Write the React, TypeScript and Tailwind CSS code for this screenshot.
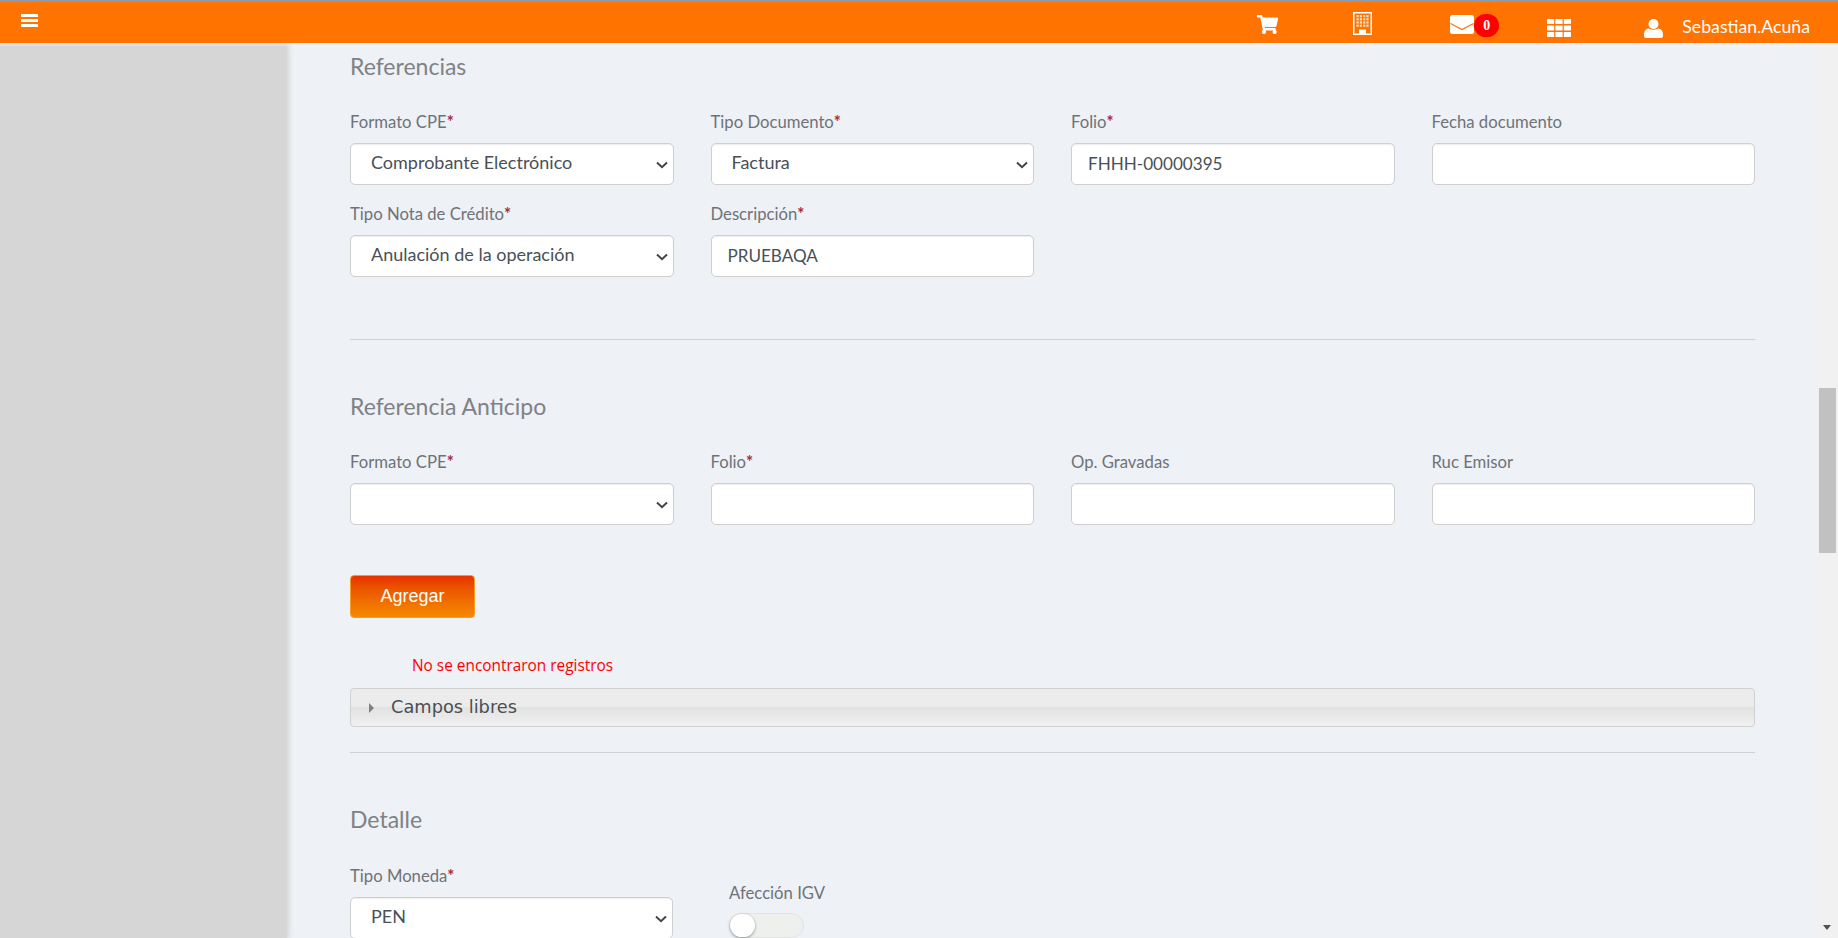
import { FaShoppingCart } from "react-icons/fa";

function Label({ text, required }: { text: string; required?: boolean }) {
  return (
    <label className="block h-[24px] text-[16.7px] leading-[24px] text-[#6f7378]">
      {text}
      {required && <span className="font-bold text-[#a52a3a]">*</span>}
    </label>
  );
}

function SelectField({ label, value, required }: { label: string; value: string; required?: boolean }) {
  return (
    <div>
      <Label text={label} required={required} />
      <div className="relative mt-[9px]">
        <select
          defaultValue={value}
          className="block h-[42px] w-full appearance-none rounded-[5px] border border-[#cfcfcf] bg-white pb-[3px] pl-[20px] pr-[24px] text-[18px] text-[#495057] shadow-[inset_0_1px_1px_rgba(0,0,0,0.075)]"
        >
          <option value={value}>{value}</option>
        </select>
        {/* chevron drawn over the select, the native one sits too far right */}
        <svg className="pointer-events-none absolute right-[6px] top-[18px]" width="12" height="8" viewBox="0 0 12 8">
          <path d="M1 1.5 L6 6.2 L11 1.5" fill="none" stroke="#444" strokeWidth="2" />
        </svg>
      </div>
    </div>
  );
}

function TextField({ label, value, required }: { label: string; value: string; required?: boolean }) {
  return (
    <div>
      <Label text={label} required={required} />
      <input
        readOnly
        value={value}
        className="mt-[9px] block h-[42px] w-full rounded-[5px] border border-[#cfcfcf] bg-white px-[16px] pb-[2px] text-[17.1px] text-[#495057] shadow-[inset_0_1px_1px_rgba(0,0,0,0.075)]"
      />
    </div>
  );
}

function Heading({ children }: { children: string }) {
  return <h2 className="text-[23px] leading-[30px] text-[#7e8286]">{children}</h2>;
}

function BarsIcon() {
  return (
    <svg className="mb-[4px] ml-[21px]" width="17" height="13" viewBox="0 0 17 13" fill="#fff">
      <rect width="17" height="3" rx="0.5" />
      <rect y="5" width="17" height="3" rx="0.5" />
      <rect y="10" width="17" height="3" rx="0.5" />
    </svg>
  );
}

function BuildingIcon() {
  const cols = [3.5, 6.8, 10.1, 13.4];
  const rows = [3, 6.2, 9.4, 12.6];
  return (
    <svg className="ml-[74px] mt-[2px]" width="19" height="23" viewBox="0 0 19 23" fill="#fff">
      <rect x="0.75" y="0.75" width="17.5" height="21.5" fill="none" stroke="#fff" strokeWidth="1.5" />
      {rows.map((y) =>
        cols.map((x) => <rect key={`${x}-${y}`} x={x} y={y} width="2.2" height="2.2" fill="#ffe3c8" />),
      )}
      <rect x="6" y="17.5" width="7" height="5" />
    </svg>
  );
}

function EnvelopeIcon() {
  return (
    <svg className="ml-[78px] mt-[4px]" width="24" height="19" viewBox="0 0 24 19">
      <rect width="24" height="19" rx="2.5" fill="#fff" />
      <path d="M0.5 8.5 L12 14.5 L23.5 8.5" fill="none" stroke="#ff7300" strokeWidth="1.2" />
    </svg>
  );
}

function GridIcon() {
  const cols = [0, 8.4, 16.8];
  const rows = [0, 6.5, 13];
  return (
    <svg className="ml-[48px] mt-[11px]" width="24" height="18" viewBox="0 0 24 18" fill="#fff">
      {rows.map((y) => cols.map((x) => <rect key={`${x}-${y}`} x={x} y={y} width="7.2" height="5" rx="0.5" />))}
    </svg>
  );
}

function UserIcon() {
  return (
    <svg className="ml-[73px] mt-[12px]" width="19" height="19" viewBox="0 0 19 19" fill="#fff">
      <circle cx="9.5" cy="5" r="5" />
      <path d="M0 15.5C0 11.5 2.5 9.5 5 9.5C6.5 11 12.5 11 14 9.5C16.5 9.5 19 11.5 19 15.5V17a2 2 0 0 1-2 2H2a2 2 0 0 1-2-2Z" />
    </svg>
  );
}

function TopBar() {
  return (
    <header className="z-10 flex h-[43px] shrink-0 items-center border-t-2 border-[#8c9ab0] bg-[#ff7300] text-white">
      <BarsIcon />
      <div className="ml-auto flex items-center">
        <FaShoppingCart className="mt-[4px] h-[19px] w-[23px]" />
        <BuildingIcon />
        <EnvelopeIcon />
        <span className="mt-[7px] flex h-[23px] w-[25px] items-center justify-center rounded-full bg-[#f00] font-['Liberation_Serif',serif] text-[14px] font-bold">
          0
        </span>
        <GridIcon />
        <UserIcon />
        <span className="ml-[19px] mr-[28px] mt-[10px] font-['Lato',sans-serif] text-[17.7px]">Sebastian.Acuña</span>
      </div>
    </header>
  );
}

function Scrollbar() {
  return (
    <div className="relative w-[21px] shrink-0 bg-[#f1f1f1]">
      <div className="ml-[2px] mt-[345px] h-[165px] w-[17px] bg-[#c1c1c1]" />
      <div className="absolute bottom-[8px] left-[6px] h-0 w-0 border-x-[4px] border-t-[5px] border-x-transparent border-t-[#505050]" />
    </div>
  );
}

export default function App() {
  return (
    <div className="flex h-[938px] w-[1838px] flex-col overflow-hidden bg-[#eef1f6] font-['Lato',sans-serif]">
      <TopBar />
      <div className="flex min-h-0 flex-1">
        {/* soft edge on top and right, same grey as the panel */}
        <aside className="mt-[3px] w-[287px] shrink-0 bg-[#d6d6d6] shadow-[0_0_5px_2px_#d6d6d6]" />
        <main className="min-w-0 flex-1 overflow-hidden pl-[63px] pr-[62px] pt-[8px]">
          <Heading>Referencias</Heading>
          <div className="mt-[29px] grid grid-cols-4 gap-x-[37px] gap-y-[17px]">
            <SelectField label="Formato CPE" value="Comprobante Electrónico" required />
            <SelectField label="Tipo Documento" value="Factura" required />
            <TextField label="Folio" value="FHHH-00000395" required />
            <TextField label="Fecha documento" value="" />
            <SelectField label="Tipo Nota de Crédito" value="Anulación de la operación" required />
            <TextField label="Descripción" value="PRUEBAQA" required />
          </div>
          <hr className="mt-[62px] border-[#cfd1d4]" />
          <div className="mt-[51px]">
            <Heading>Referencia Anticipo</Heading>
          </div>
          <div className="mt-[29px] grid grid-cols-4 gap-x-[37px]">
            <SelectField label="Formato CPE" value="" required />
            <TextField label="Folio" value="" required />
            <TextField label="Op. Gravadas" value="" />
            <TextField label="Ruc Emisor" value="" />
          </div>
          <button className="mt-[50px] block h-[43px] w-[125px] rounded-[4px] border border-[#f59a23] bg-gradient-to-b from-[#e63200] to-[#f58a00] font-['Liberation_Sans',sans-serif] text-[18px] text-white">
            Agregar
          </button>
          <p className="ml-[62px] mt-[36px] font-['Open_Sans',sans-serif] text-[15.4px] leading-[24px] text-[#f00]">
            No se encontraron registros
          </p>
          <div className="mt-[10px] flex h-[39px] items-center rounded-[4px] border border-[#d0d0d0] bg-[linear-gradient(#ececec_50%,#e2e2e2_50%,#f0f0f0)] pl-[18px]">
            <span className="h-0 w-0 border-y-[5px] border-l-[5px] border-y-transparent border-l-[#808080]" />
            <span className="ml-[17px] font-['DejaVu_Sans',sans-serif] text-[17.8px] text-[#4a4f55]">Campos libres</span>
          </div>
          <hr className="mt-[25px] border-[#cfd1d4]" />
          <div className="mt-[51px]">
            <Heading>Detalle</Heading>
          </div>
          <div className="mt-[30px] flex gap-[56px]">
            <div className="w-[323px]">
              <SelectField label="Tipo Moneda" value="PEN" required />
            </div>
            <div className="mt-[17px] w-[200px]">
              <Label text="Afección IGV" />
              <div className="relative mt-[8px] h-[25px] w-[75px] rounded-full border border-[#e2e4e4] bg-[#eef0ee]">
                <span className="absolute left-0 top-0 h-[23px] w-[25px] rounded-full bg-white shadow-[0_1px_3px_rgba(0,0,0,0.4)]" />
              </div>
            </div>
          </div>
        </main>
        <Scrollbar />
      </div>
    </div>
  );
}
